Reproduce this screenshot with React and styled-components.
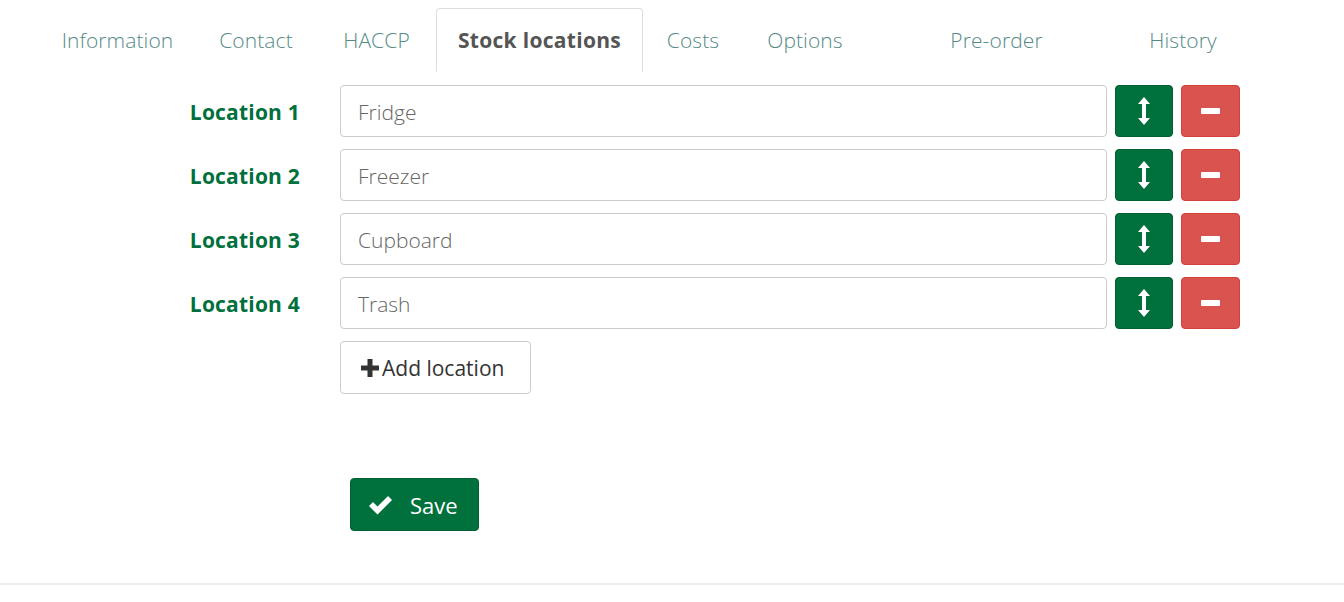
import React from "react";
import styled, { createGlobalStyle } from "styled-components";

const GlobalStyle = createGlobalStyle`
  body {
    margin: 0;
    background: #fff;
    font-family: "Open Sans", Lato, Arial, sans-serif;
  }
`;

const GREEN = "#00703c";
const RED = "#d9534f";

const Page = styled.div`
  width: 1344px;
  height: 602px;
  position: relative;
  box-sizing: border-box;
  padding-top: 8px;
`;

const Content = styled.div`
  width: 1200px;
  margin-left: 40px;
`;

const Tabs = styled.ul`
  display: flex;
  list-style: none;
  margin: 0;
  padding: 0;
  border-bottom: 1px solid #ddd;
  height: 63px;
`;

const Tab = styled.li`
  box-sizing: border-box;
  width: ${(p) => p.$w}px;
  height: 64px;
  display: flex;
  align-items: center;
  justify-content: center;
  font-size: 21px;
  white-space: nowrap;
  color: ${(p) => (p.$active ? "#555" : "#568a86")};
  font-weight: ${(p) => (p.$active ? 700 : 300)};
  letter-spacing: ${(p) => (p.$active ? "0.3px" : "0.1px")};
  border: 1px solid ${(p) => (p.$active ? "#ddd" : "transparent")};
  border-bottom-color: ${(p) => (p.$active ? "#fff" : "transparent")};
  border-radius: 4px 4px 0 0;
  background: #fff;
  padding-bottom: 1px;
`;

const Form = styled.div`
  display: flex;
  flex-direction: column;
  gap: 12px;
  margin-top: 13px;
`;

const Row = styled.div`
  display: grid;
  grid-template-columns: 260px 1fr;
  column-gap: 40px;
  align-items: center;
`;

const Label = styled.label`
  text-align: right;
  font-size: 21px;
  font-weight: 700;
  letter-spacing: 0.2px;
  color: ${GREEN};
  padding-top: 1px;
`;

const Controls = styled.div`
  display: flex;
  gap: 8px;
`;

const Input = styled.div`
  flex: 1;
  box-sizing: border-box;
  height: 52px;
  border: 1px solid #ccc;
  border-radius: 4px;
  display: flex;
  align-items: center;
  padding: 1px 0 0 17px;
  font-size: 21px;
  font-weight: 300;
  color: #666;
`;

const IconButton = styled.button`
  box-sizing: border-box;
  width: ${(p) => (p.$danger ? 59 : 58)}px;
  height: 52px;
  border: 1px solid ${(p) => (p.$danger ? "#d43f3a" : "#005f33")};
  border-radius: 4px;
  background: ${(p) => (p.$danger ? RED : GREEN)};
  display: flex;
  align-items: center;
  justify-content: center;
  padding: 0;
`;

const AddButton = styled.button`
  box-sizing: border-box;
  width: 191px;
  height: 53px;
  padding: 1px 0 0 19px;
  border: 1px solid #ccc;
  border-radius: 4px;
  background: #fff;
  color: #333;
  font-family: inherit;
  font-size: 21px;
  display: flex;
  align-items: center;
  gap: 2px;
  justify-self: start;
`;

const SaveWrap = styled.div`
  margin-top: 84px;
  margin-left: 310px;
`;

const SaveButton = styled.button`
  box-sizing: border-box;
  width: 129px;
  height: 53px;
  border: 1px solid #005f33;
  border-radius: 4px;
  background: ${GREEN};
  color: #fff;
  font-family: inherit;
  font-size: 22px;
  display: flex;
  align-items: center;
  padding: 0 0 0 17px;
  gap: 17px;
`;

const Footer = styled.div`
  position: absolute;
  left: 0;
  right: 0;
  top: 583px;
  border-top: 2px solid #ececec;
`;

const tabs = [
  ["Information", 155],
  ["Contact", 122],
  ["HACCP", 119],
  ["Stock locations", 207, true],
  ["Costs", 100],
  ["Options", 124],
  ["Pre-order", 259],
  ["History", 114],
];

const locations = ["Fridge", "Freezer", "Cupboard", "Trash"];

const ArrowsV = () => (
  <svg width="12" height="28" viewBox="0 0 12 28">
    <path d="M6 0 L12 7 H8 V21 H12 L6 28 L0 21 H4 V7 H0 Z" fill="#fff" />
  </svg>
);

const Minus = () => (
  <svg width="19" height="6" viewBox="0 0 19 6">
    <rect width="19" height="6" rx="1" fill="#fff" />
  </svg>
);

const Plus = () => (
  <svg width="20" height="20" viewBox="0 0 20 20">
    <path d="M7.5 1 H12.5 V7.5 H19 V12.5 H12.5 V19 H7.5 V12.5 H1 V7.5 H7.5 Z" fill="#333" />
  </svg>
);

const Check = () => (
  <svg width="25" height="20" viewBox="0 0 25 20">
    <path d="M1 11 L5 7 L9.5 11.5 L20 1 L24 5 L9.5 19.5 Z" fill="#fff" />
  </svg>
);

export default function App() {
  return (
    <Page>
      <GlobalStyle />
      <Content>
        <Tabs>
          {tabs.map(([name, w, active]) => (
            <Tab key={name} $w={w} $active={active}>
              {name}
            </Tab>
          ))}
        </Tabs>
        <Form>
          {locations.map((loc, i) => (
            <Row key={loc}>
              <Label>Location {i + 1}</Label>
              <Controls>
                <Input>{loc}</Input>
                <IconButton>
                  <ArrowsV />
                </IconButton>
                <IconButton $danger>
                  <Minus />
                </IconButton>
              </Controls>
            </Row>
          ))}
          <Row>
            <span />
            <AddButton>
              <Plus />
              Add location
            </AddButton>
          </Row>
        </Form>
        <SaveWrap>
          <SaveButton>
            <Check />
            Save
          </SaveButton>
        </SaveWrap>
      </Content>
      <Footer />
    </Page>
  );
}
